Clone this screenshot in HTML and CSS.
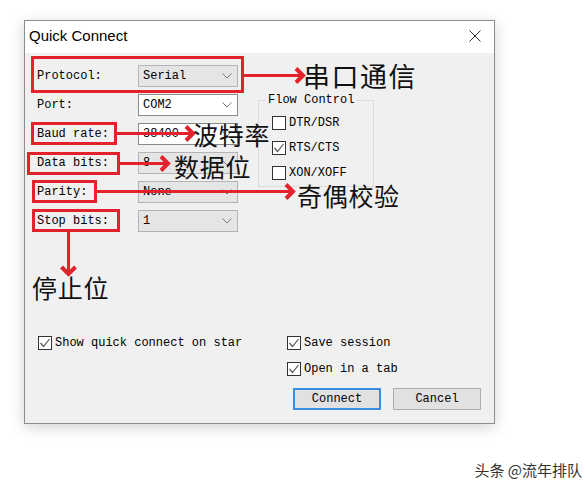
FILE: index.html
```html
<!DOCTYPE html>
<html lang="zh-CN">
<head>
    <meta charset="UTF-8">
    <meta name="viewport" content="width=device-width, initial-scale=1.0">
    <title>Quick Connect</title>
    <link rel="stylesheet" href="styles.css">
</head>
<body>
    <div class="page">
        <div class="dialog">
            <div class="titlebar">
                <span class="title">Quick Connect</span>
                <svg class="close" width="12" height="12" viewBox="0 0 12 12"><path d="M0.5 0.5L11.5 11.5M11.5 0.5L0.5 11.5" stroke="#333" stroke-width="1" fill="none"/></svg>
            </div>
            <div class="dialog-body">
                <div class="top">
                    <div class="fields">
                        <label class="field-label">Protocol:</label>
                        <div class="combo"><span>Serial</span><svg class="chev" width="10" height="6" viewBox="0 0 10 6"><polyline points="0.5,0.5 5,5 9.5,0.5"/></svg></div>

                        <label class="field-label">Port:</label>
                        <div class="combo combo-edit"><span>COM2</span><svg class="chev" width="10" height="6" viewBox="0 0 10 6"><polyline points="0.5,0.5 5,5 9.5,0.5"/></svg></div>

                        <label class="field-label">Baud rate:</label>
                        <div class="combo combo-edit"><span>38400</span><svg class="chev" width="10" height="6" viewBox="0 0 10 6"><polyline points="0.5,0.5 5,5 9.5,0.5"/></svg></div>

                        <label class="field-label">Data bits:</label>
                        <div class="combo"><span>8</span><svg class="chev" width="10" height="6" viewBox="0 0 10 6"><polyline points="0.5,0.5 5,5 9.5,0.5"/></svg></div>

                        <label class="field-label">Parity:</label>
                        <div class="combo"><span>None</span><svg class="chev" width="10" height="6" viewBox="0 0 10 6"><polyline points="0.5,0.5 5,5 9.5,0.5"/></svg></div>

                        <label class="field-label">Stop bits:</label>
                        <div class="combo"><span>1</span><svg class="chev" width="10" height="6" viewBox="0 0 10 6"><polyline points="0.5,0.5 5,5 9.5,0.5"/></svg></div>
                    </div>

                    <fieldset class="flow">
                        <legend>Flow Control</legend>
                        <label class="check"><svg class="box" width="14" height="14" viewBox="0 0 14 14"><rect x="0.5" y="0.5" width="13" height="13"/></svg>DTR/DSR</label>
                        <label class="check"><svg class="box" width="14" height="14" viewBox="0 0 14 14"><rect x="0.5" y="0.5" width="13" height="13"/><polyline points="2.5,7 5.5,10.5 11.5,3"/></svg>RTS/CTS</label>
                        <label class="check"><svg class="box" width="14" height="14" viewBox="0 0 14 14"><rect x="0.5" y="0.5" width="13" height="13"/></svg>XON/XOFF</label>
                    </fieldset>
                </div>

                <div class="bottom">
                    <div class="bottom-left">
                        <label class="check"><svg class="box" width="14" height="14" viewBox="0 0 14 14"><rect x="0.5" y="0.5" width="13" height="13"/><polyline points="2.5,7 5.5,10.5 11.5,3"/></svg>Show quick connect on star</label>
                    </div>
                    <div class="bottom-right">
                        <label class="check"><svg class="box" width="14" height="14" viewBox="0 0 14 14"><rect x="0.5" y="0.5" width="13" height="13"/><polyline points="2.5,7 5.5,10.5 11.5,3"/></svg>Save session</label>
                        <label class="check"><svg class="box" width="14" height="14" viewBox="0 0 14 14"><rect x="0.5" y="0.5" width="13" height="13"/><polyline points="2.5,7 5.5,10.5 11.5,3"/></svg>Open in a tab</label>
                        <div class="buttons">
                            <button class="btn btn-default">Connect</button>
                            <button class="btn">Cancel</button>
                        </div>
                    </div>
                </div>
            </div>
        </div>

        <div class="watermark">头条 @流年排队</div>

        <!-- red notes drawn over the screenshot -->
        <svg class="marks" width="588" height="481" viewBox="0 0 588 481">
            <g class="mark-lines">
                <rect x="32.5" y="57.5" width="210" height="34"/>
                <rect x="32.5" y="123.5" width="83" height="20"/>
                <rect x="28.5" y="153.5" width="90" height="20"/>
                <rect x="33.5" y="181.5" width="62" height="20"/>
                <rect x="33.5" y="210.5" width="85" height="20"/>
                <path d="M244 75.5H300M117 133.5H190M120 163.5H165M97 191.5H290M68.5 232V271"/>
            </g>
            <g class="mark-heads">
                <polyline points="296,68.5 303,75.5 296,82.5"/>
                <polyline points="186,126.5 193,133.5 186,140.5"/>
                <polyline points="161,156.5 168,163.5 161,170.5"/>
                <polyline points="286,184.5 293,191.5 286,198.5"/>
                <polyline points="61.5,267 68.5,274 75.5,267"/>
            </g>
            <g class="mark-text">
                <text class="mk-lg" x="303" y="87">串口通信</text>
                <text class="mk" x="193" y="144.5">波特率</text>
                <text class="mk" x="174" y="176.5">数据位</text>
                <text class="mk" x="297" y="205.5">奇偶校验</text>
                <text class="mk" x="32" y="298">停止位</text>
            </g>
        </svg>
    </div>
</body>
</html>
```

FILE: styles.css
```css
*{
    box-sizing: border-box;
}
body{
    margin: 0;
    background: #fff;
    overflow: hidden;
}
.page{
    position: relative;
    width: 588px;
    height: 481px;
    padding: 20px 0 0 24px;
    font-family: "Liberation Mono", monospace;
    font-size: 12px;
    color: #000;
}
.dialog{
    width: 471px;
    height: 404px;
    border: 1px solid #8c8c8c;
    background: #f0f0f0;
    box-shadow: 0 3px 14px rgba(0, 0, 0, 0.18);
    display: flex;
    flex-direction: column;
}
.titlebar{
    height: 32px;
    background: #fff;
    display: flex;
    align-items: center;
    justify-content: space-between;
    padding: 0 13px 3px 4px;
}
.title{
    font-family: "Segoe UI", "Liberation Sans", sans-serif;
    font-size: 15px;
    color: #000;
}
.dialog-body{
    flex: 1;
    padding: 12px 0 0 12px;
}
.top{
    display: flex;
    align-items: flex-start;
}
.fields{
    display: grid;
    grid-template-columns: 101px 100px;
    grid-auto-rows: 22px;
    row-gap: 7px;
    align-items: center;
}
.field-label{
    line-height: 22px;
    white-space: nowrap;
}
.combo{
    height: 22px;
    display: flex;
    align-items: center;
    justify-content: space-between;
    padding: 0 5px 0 4px;
    border: 1px solid #b4b4b4;
    background: #e5e5e5;
}
.combo-edit{
    background: #fff;
    border-color: #8a8a8a;
}
.chev polyline{
    fill: none;
    stroke: #777;
    stroke-width: 1;
}

/* flow control group */
.flow{
    margin: 28px 0 0 20px;
    padding: 9px 0 6px 13px;
    width: 116px;
    border: 1px solid #dcdcdc;
    display: flex;
    flex-direction: column;
    gap: 11px;
}
.flow legend{
    font-size: 12px;
    line-height: 14px;
    padding: 0 2px;
    margin-left: -6px;
}
.check{
    display: flex;
    align-items: center;
    gap: 3px;
    line-height: 14px;
    white-space: nowrap;
}
.box{
    flex: none;
}
.box rect{
    fill: #fff;
    stroke: #333;
}
.box polyline{
    fill: none;
    stroke: #555;
    stroke-width: 1.2;
}

/* lower part */
.bottom{
    display: flex;
    margin-top: 104px;
}
.bottom-left{
    width: 250px;
    padding-left: 1px;
}
.bottom-right{
    display: flex;
    flex-direction: column;
    gap: 12px;
}
.buttons{
    display: flex;
    gap: 12px;
    margin: 0 0 0 6px;
}
.btn{
    width: 88px;
    height: 22px;
    padding: 0;
    border: 1px solid #adadad;
    background: #e1e1e1;
    font-family: "Liberation Mono", monospace;
    font-size: 12px;
    color: #000;
}
.btn-default{
    border: 2px solid #3a8de0;
}

.watermark{
    margin-top: 37px;
    padding-right: 6px;
    text-align: right;
    font-family: "Noto Sans CJK SC", sans-serif;
    font-size: 15px;
    line-height: 18px;
    color: #333;
}

/* annotations */
.marks{
    position: absolute;
    top: 0;
    left: 0;
    pointer-events: none;
}
.mark-lines{
    fill: none;
    stroke: #e3222c;
    stroke-width: 3;
}
.mark-heads{
    fill: none;
    stroke: #e3222c;
    stroke-width: 4;
}
.mark-text{
    font-family: "Noto Sans CJK SC", sans-serif;
    fill: #111;
}
.mk-lg{
    font-size: 27px;
    letter-spacing: 1.5px;
}
.mk{
    font-size: 25px;
    letter-spacing: 0.7px;
}
```
